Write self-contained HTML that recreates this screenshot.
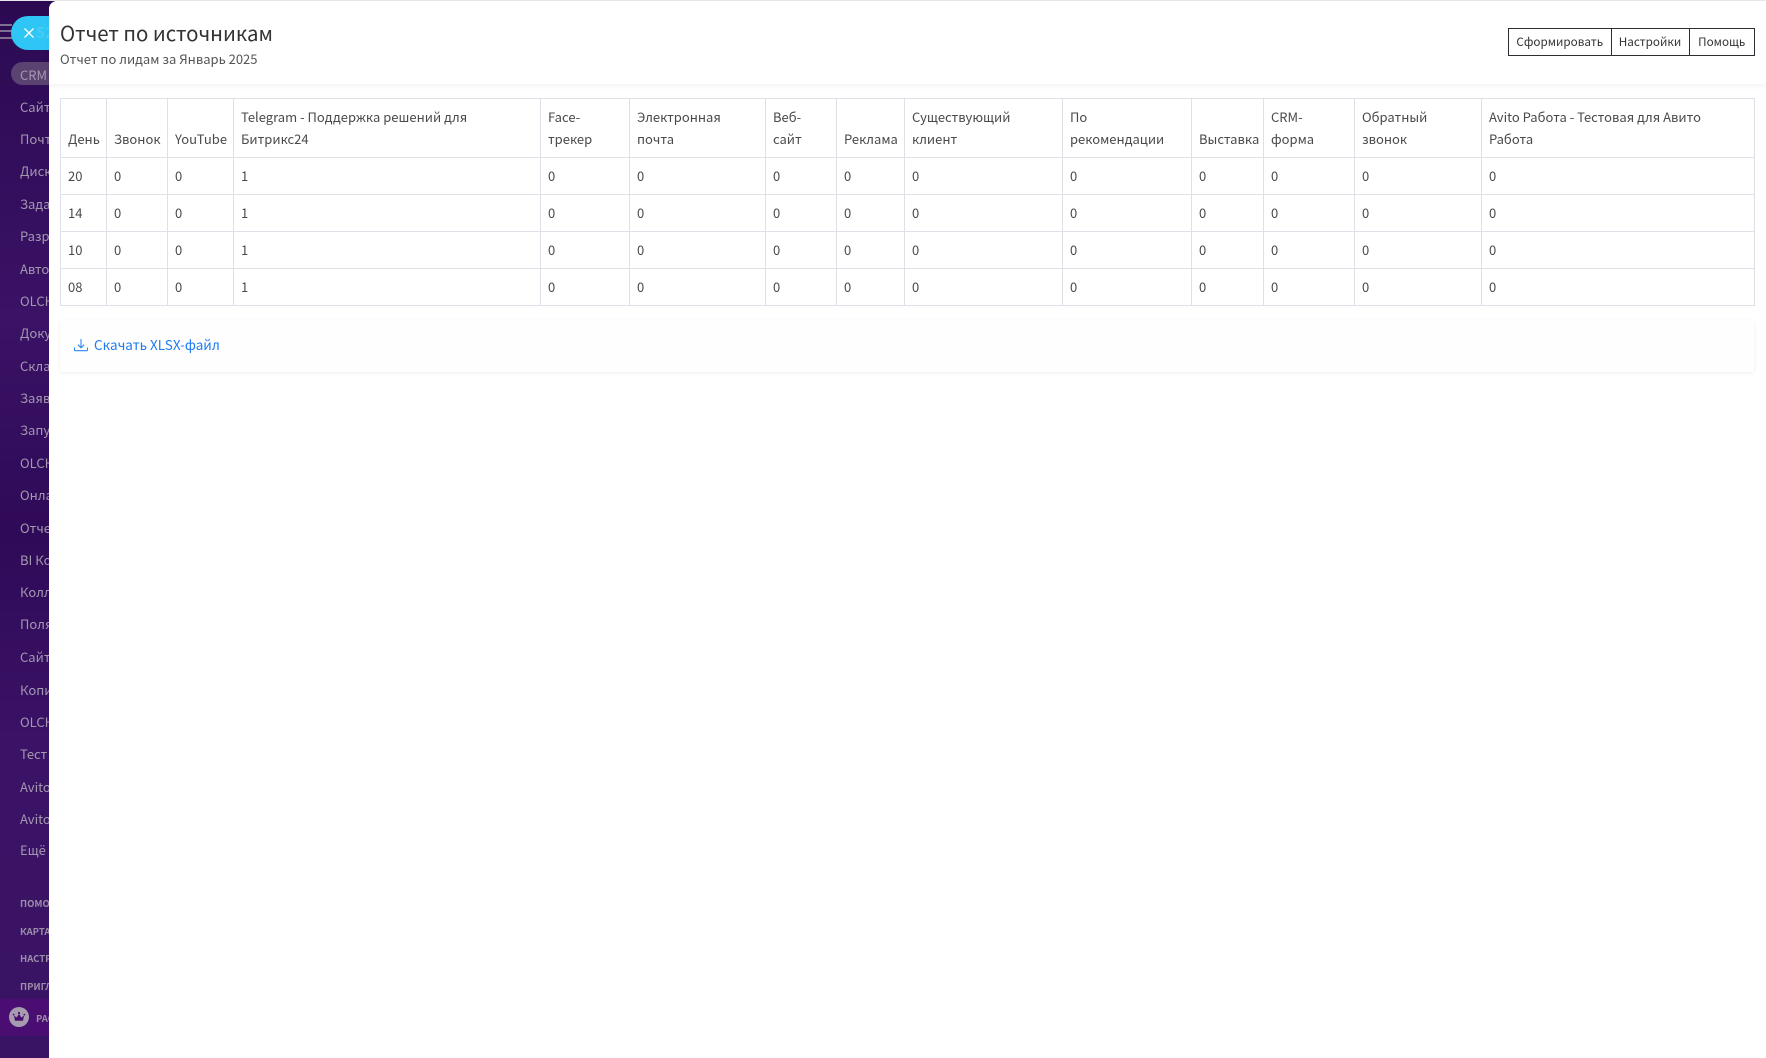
<!DOCTYPE html>
<html lang="ru"><head><meta charset="utf-8"><title>Отчет по источникам</title>
<style>
html,body{margin:0;padding:0;width:1766px;height:1058px;overflow:hidden;background:#fff}
body{position:relative;font-family:"Noto Sans CJK SC","Liberation Sans",sans-serif;color:#333}
#side{position:absolute;left:0;top:1px;width:60px;height:1057px;background:linear-gradient(180deg,#2c0a52 0,#3a1266 30%,#2f0a58 50%,#3a1266 70%,#3a1464 100%);overflow:hidden}
#side div{position:absolute;left:20px;font-size:13px;line-height:20px;color:#a398b0;white-space:nowrap}
#side div.s{font-size:9.5px;font-weight:700;color:#9c8daa}
#side #ham{left:0;top:23px;width:12px;height:11px;border-top:2px solid #7f7090;border-bottom:2px solid #7f7090}
#ham:after{content:"";position:absolute;left:0;right:0;top:3.5px;height:2px;background:#7f7090}
#btn{position:absolute;left:11px;top:16px;width:50px;height:34px;background:#2fc6f6;border-radius:17px 0 0 17px;overflow:hidden}
#btn span{position:absolute;left:25px;top:6px;font-size:15px;line-height:22px;font-weight:700;color:#45cdf7}
#side #pill{left:11px;top:61px;width:60px;height:23px;background:#5a4370;border-radius:12px}
#side #bar{left:0;top:998px;width:60px;height:37px;background:#4a0d72}
#panel{position:absolute;left:49px;top:1px;width:1717px;height:1057px;background:#fff;border-radius:8px 0 0 0}
#top{position:absolute;left:0;top:0;width:1766px;height:1px;background:#e8e8ec}
#head{position:absolute;left:49px;top:1px;width:1717px;height:83px;background:#fff;border-radius:8px 0 0 0;box-shadow:0 2px 6px rgba(0,0,0,.05)}
h1{position:absolute;left:60px;top:17px;margin:0;font-size:20.4px;font-weight:400;line-height:30px;color:#333;white-space:nowrap}
#sub{position:absolute;left:60px;top:49px;font-size:13px;line-height:20px;color:#555;white-space:nowrap}
.b{position:absolute;top:28px;height:28px;box-sizing:border-box;border:1.5px solid #2b2f33;font-size:11.7px;line-height:25px;text-align:center;color:#333;white-space:nowrap;background:#fff}
table{position:absolute;left:60px;top:98px;width:1694px;border-collapse:collapse;table-layout:fixed;font-size:13px;line-height:22px;color:#4a4a4a}
th,td{border:1px solid #dfe1e8;padding:0 7px;text-align:left;font-weight:400;overflow:hidden}
th{height:59px;vertical-align:bottom;padding-bottom:7px;box-sizing:border-box}
td{height:37px;box-sizing:border-box;vertical-align:middle}
#card{position:absolute;left:60px;top:320px;width:1694px;height:52px;background:#fefefe;box-shadow:0 1px 4px rgba(0,0,0,.07);border-radius:2px}
#dl{position:absolute;left:94px;top:334px;font-size:13.5px;line-height:20px;color:#1f7bf2;white-space:nowrap}
svg{position:absolute}
</style></head><body>
<div id="side">
<div id="ham"></div>
<div id="pill"></div>
<div style="top:64px">CRM</div>
<div style="top:96px">Сайт</div>
<div style="top:128px">Почта</div>
<div style="top:160px">Диск</div>
<div style="top:193px">Задачи</div>
<div style="top:225px">Разработка</div>
<div style="top:258px">Автоматизация</div>
<div style="top:290px">OLCH</div>
<div style="top:322px">Документы</div>
<div style="top:355px">Склад</div>
<div style="top:387px">Заявки</div>
<div style="top:419px">Запуск</div>
<div style="top:452px">OLCH</div>
<div style="top:484px">Онлайн</div>
<div style="top:517px">Отчеты</div>
<div style="top:549px">BI Конструктор</div>
<div style="top:581px">Коллабы</div>
<div style="top:613px">Поляна</div>
<div style="top:646px">Сайты</div>
<div style="top:679px">Копии</div>
<div style="top:711px">OLCH</div>
<div style="top:743px">Тест</div>
<div style="top:776px">Avito</div>
<div style="top:808px">Avito</div>
<div style="top:839px">Ещё</div>
<div class="s" style="top:892px">ПОМОЩЬ</div>
<div class="s" style="top:920px">КАРТА</div>
<div class="s" style="top:947px">НАСТРОЙКИ</div>
<div class="s" style="top:975px">ПРИГЛАСИТЬ</div>
<div id="bar"></div>
<div class="s" style="left:36px;top:1007px">РАСШИРИТЬ</div>
</div>
<svg style="left:9px;top:1007px" width="20" height="20" viewBox="0 0 20 20"><circle cx="10" cy="10" r="10" fill="#a79bb0"/><path d="M5 8.500l2.600 2 2.400-3.600 2.400 3.600 2.600-2-1 5.200H6z" fill="#4a0d72"/><circle cx="10" cy="6" r="1.100" fill="#4a0d72"/><circle cx="4.600" cy="7.600" r=".9" fill="#4a0d72"/><circle cx="15.400" cy="7.600" r=".9" fill="#4a0d72"/></svg>
<div id="btn"><span>52</span></div>
<svg style="left:23px;top:27px" width="12" height="12" viewBox="0 0 12 12"><path d="M1.500 1.500l9 9M10.500 1.500l-9 9" stroke="#fff" stroke-width="1.400" fill="none"/></svg>
<div id="panel"></div>
<div id="top"></div>
<div id="head"></div>
<h1>Отчет по источникам</h1>
<div id="sub">Отчет по лидам за Январь 2025</div>
<div class="b" style="left:1508px;width:103.500px">Сформировать</div>
<div class="b" style="left:1610.500px;width:79px">Настройки</div>
<div class="b" style="left:1688.500px;width:66.500px">Помощь</div>
<table>
<colgroup><col style="width:46px"><col style="width:61px"><col style="width:66px"><col style="width:307px"><col style="width:89px"><col style="width:136px"><col style="width:71px"><col style="width:68px"><col style="width:158px"><col style="width:129px"><col style="width:72px"><col style="width:91px"><col style="width:127px"><col style="width:273px"></colgroup>
<tr><th>День</th><th>Звонок</th><th>YouTube</th><th>Telegram - Поддержка решений для Битрикс24</th><th>Face-<br>трекер</th><th>Электронная<br>почта</th><th>Веб-<br>сайт</th><th>Реклама</th><th>Существующий<br>клиент</th><th>По<br>рекомендации</th><th>Выставка</th><th>CRM-<br>форма</th><th>Обратный<br>звонок</th><th>Avito Работа - Тестовая для Авито Работа</th></tr>
<tr><td>20</td><td>0</td><td>0</td><td>1</td><td>0</td><td>0</td><td>0</td><td>0</td><td>0</td><td>0</td><td>0</td><td>0</td><td>0</td><td>0</td></tr>
<tr><td>14</td><td>0</td><td>0</td><td>1</td><td>0</td><td>0</td><td>0</td><td>0</td><td>0</td><td>0</td><td>0</td><td>0</td><td>0</td><td>0</td></tr>
<tr><td>10</td><td>0</td><td>0</td><td>1</td><td>0</td><td>0</td><td>0</td><td>0</td><td>0</td><td>0</td><td>0</td><td>0</td><td>0</td><td>0</td></tr>
<tr><td>08</td><td>0</td><td>0</td><td>1</td><td>0</td><td>0</td><td>0</td><td>0</td><td>0</td><td>0</td><td>0</td><td>0</td><td>0</td><td>0</td></tr>
</table>
<div id="card"></div>
<svg style="left:73px;top:337px" width="16" height="16" viewBox="0 0 16 16" fill="none" stroke="#2f86f5" stroke-width="1.100"><path d="M8 2v8.500M4.800 7.600L8 10.800l3.200-3.200M1.500 10.500v2.200c0 .6.400 1 1 1h11c.6 0 1-.4 1-1v-2.200"/></svg>
<div id="dl">Скачать XLSX-файл</div>
</body></html>
